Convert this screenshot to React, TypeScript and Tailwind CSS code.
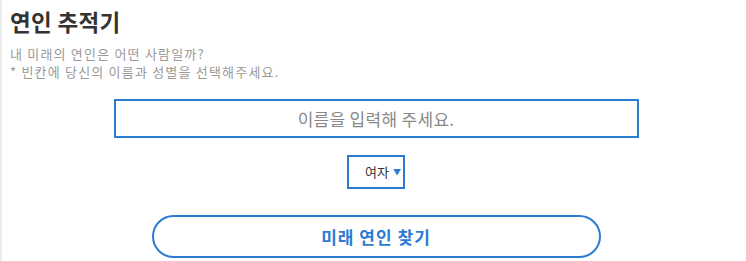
import { useState } from 'react';

const FONT = { fontFamily: '"Noto Sans CJK KR", "Noto Sans", sans-serif' };

export default function App() {
  const [name, setName] = useState('');
  const [gender, setGender] = useState('female');

  return (
    <div className="min-h-screen bg-white border-l-2 border-[#ececec]" style={FONT}>
      <div className="px-[8px] pt-[5px]">
        <h1 className="text-[22.5px] font-bold text-[#333] leading-[32px] tracking-[0.3px]">연인 추적기</h1>
        <div className="mt-[8px] text-[13px] leading-[18px] text-[#999] tracking-[1.2px]">
          <p>내 미래의 연인은 어떤 사람일까?</p>
          <p>* 빈칸에 당신의 이름과 성별을 선택해주세요.</p>
        </div>
      </div>

      <div className="flex flex-col items-center pl-[4px]">
        <input
          value={name}
          onChange={e => setName(e.target.value)}
          placeholder="이름을 입력해 주세요."
          className="mt-[18px] w-[525px] h-[39px] border-2 border-[#2b7bd3] text-center text-[17px] tracking-[0.3px] text-[#555] placeholder:text-[#888] outline-none"
        />

        <div className="mt-[17px] relative w-[58px] h-[34px] border-2 border-[#2b7bd3] bg-white">
          <select
            value={gender}
            onChange={e => setGender(e.target.value)}
            className="appearance-none w-full h-full bg-transparent pl-[16px] text-[13px] text-[#333] outline-none"
          >
            <option value="female">여자</option>
            <option value="male">남자</option>
          </select>
          <span className="pointer-events-none absolute right-[2px] top-[9px] text-[8px] text-[#2b7bd3]">▼</span>
        </div>

        <button className="mt-[26px] w-[449px] h-[43px] rounded-full border-2 border-[#2b7bd3] bg-white text-[17px] font-bold tracking-[1px] text-[#2b7bd3]">
          미래 연인 찾기
        </button>
      </div>
    </div>
  );
}
